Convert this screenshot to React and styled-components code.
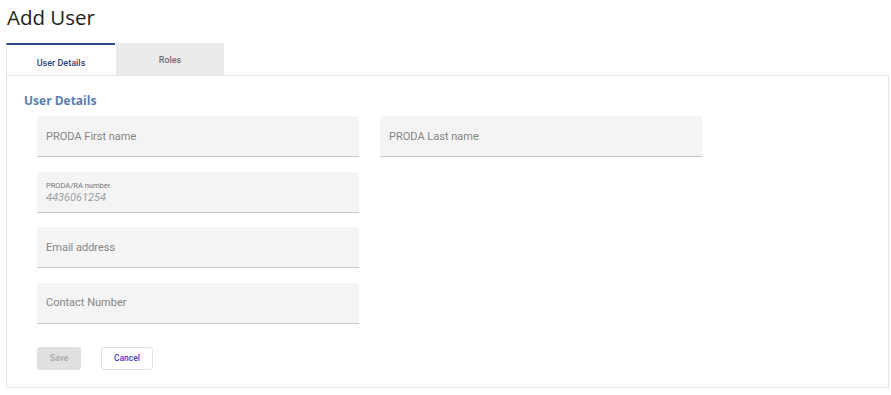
import React from "react";
import styled, { createGlobalStyle } from "styled-components";

const GlobalStyle = createGlobalStyle`
  body {
    margin: 0;
    background: #ffffff;
    font-family: Roboto, "Liberation Sans", sans-serif;
  }
`;

const Page = styled.div`
  width: 891px;
  height: 395px;
  padding: 0 2px 0 6px;
  box-sizing: border-box;
`;

const Title = styled.h1`
  margin: 0;
  padding: 4px 0 0 1px;
  height: 43px;
  box-sizing: border-box;
  font-family: "Open Sans", sans-serif;
  font-weight: 400;
  font-size: 20.5px;
  line-height: 26px;
  color: #222;
`;

const TabBar = styled.div`
  display: flex;
  height: 32px;
`;

const Tab = styled.div`
  width: ${(p) => (p.active ? "109px" : "108px")};
  margin-right: ${(p) => (p.active ? "1px" : "0")};
  box-sizing: border-box;
  display: flex;
  justify-content: center;
  align-items: center;
  padding-top: ${(p) => (p.active ? "6px" : "0")};
  padding-bottom: ${(p) => (p.active ? "0" : "1px")};
  background: ${(p) => (p.active ? "#ffffff" : "#ebebeb")};
  border-top: 2px solid ${(p) => (p.active ? "#2c4a8c" : "#ebebeb")};
  border-left: ${(p) => (p.active ? "1px solid #e6e6e6" : "none")};
  font-size: 9px;
  font-weight: 500;
  color: ${(p) => (p.active ? "#2f3f7a" : "#707070")};
`;

const Panel = styled.div`
  border: 1px solid #e4e4e4;
  height: 313px;
  box-sizing: border-box;
  padding: 18px 0 0 17px;
`;

const Heading = styled.h2`
  margin: 0 0 8px;
  font-family: "Open Sans", sans-serif;
  font-weight: 700;
  font-size: 12px;
  line-height: 14px;
  color: #5b7eaa;
`;

const Form = styled.div`
  padding-left: 13px;
  display: grid;
  grid-template-columns: 322px 322px;
  column-gap: 21px;
  row-gap: 14.5px;
`;

const Field = styled.div`
  height: 41px;
  box-sizing: border-box;
  background: #f4f4f4;
  border-radius: 3px 3px 0 0;
  border-bottom: 1px solid #c9c9c9;
  padding: 0 9px;
  display: flex;
  flex-direction: column;
  justify-content: center;
  grid-column: ${(p) => (p.full ? "1 / 2" : "auto")};
`;

const Placeholder = styled.span`
  font-size: 11px;
  color: #858585;
`;

const SmallLabel = styled.span`
  font-size: 7.5px;
  color: #767676;
  margin-top: 3px;
  line-height: 10px;
`;

const Value = styled.span`
  font-size: 11px;
  font-style: italic;
  color: #a0a0a0;
  line-height: 14px;
`;

const Actions = styled.div`
  display: flex;
  gap: 20px;
  padding: 23px 0 0 13px;
`;

const Button = styled.button`
  height: 23px;
  padding: 0;
  width: ${(p) => (p.primary ? "44px" : "52px")};
  border-radius: 3px;
  font-family: Roboto, sans-serif;
  font-size: 8.5px;
  font-weight: 500;
  background: ${(p) => (p.primary ? "#e0e0e0" : "#ffffff")};
  color: ${(p) => (p.primary ? "#a9a9a9" : "#3b3fb8")};
  border: 1px solid ${(p) => (p.primary ? "#e0e0e0" : "#e2e2e2")};
`;

export default function App() {
  return (
    <>
      <GlobalStyle />
      <Page>
        <Title>Add User</Title>
        <TabBar>
          <Tab active>User Details</Tab>
          <Tab>Roles</Tab>
        </TabBar>
        <Panel>
          <Heading>User Details</Heading>
          <Form>
            <Field>
              <Placeholder>PRODA First name</Placeholder>
            </Field>
            <Field>
              <Placeholder>PRODA Last name</Placeholder>
            </Field>
            <Field full>
              <SmallLabel>PRODA/RA number</SmallLabel>
              <Value>4436061254</Value>
            </Field>
            <div />
            <Field full>
              <Placeholder>Email address</Placeholder>
            </Field>
            <div />
            <Field full>
              <Placeholder>Contact Number</Placeholder>
            </Field>
          </Form>
          <Actions>
            <Button primary>Save</Button>
            <Button>Cancel</Button>
          </Actions>
        </Panel>
      </Page>
    </>
  );
}
